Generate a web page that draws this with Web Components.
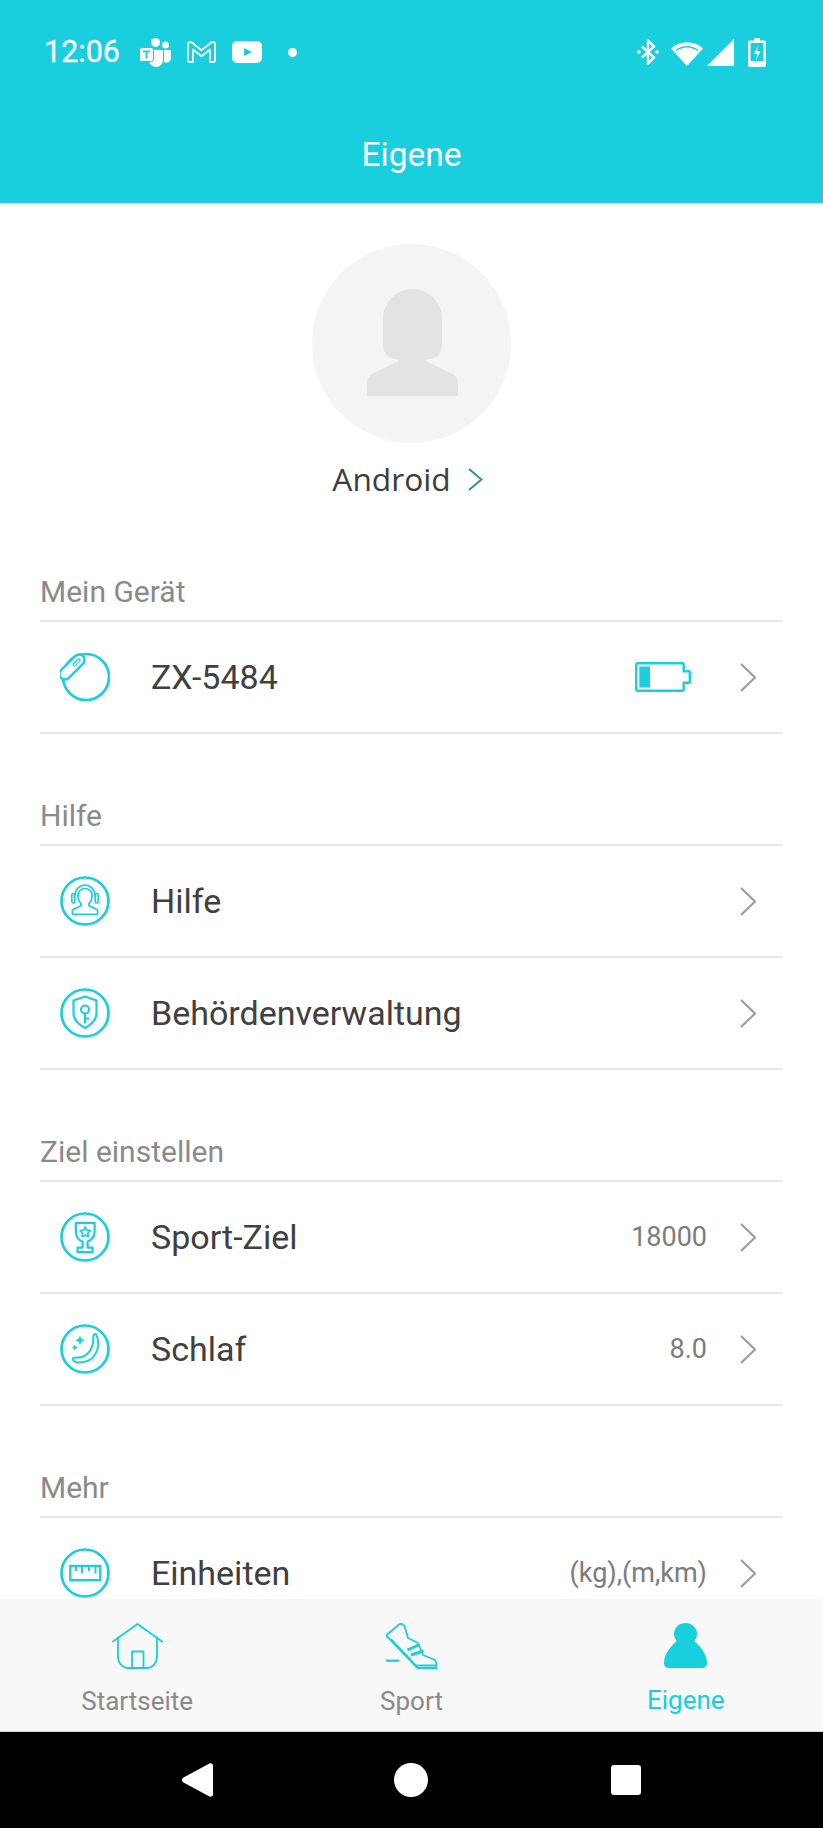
<!DOCTYPE html>
<html lang="de">
<head>
<meta charset="utf-8">
<title>Eigene</title>
<style>
  html, body { margin: 0; padding: 0; background: #fff; }
  body { font-family: Roboto, "Liberation Sans", sans-serif; }
</style>
</head>
<body>
<app-shell>
  <status-bar></status-bar>
  <title-bar>Eigene</title-bar>
  <scroll-area>
    <user-profile name="Android"></user-profile>
    <menu-section label="Mein Gerät">
      <menu-row label="ZX-5484" icon="device"><app-icon name="battery" slot="extra"></app-icon></menu-row>
    </menu-section>
    <menu-section label="Hilfe">
      <menu-row label="Hilfe" icon="help"></menu-row>
      <menu-row label="Behördenverwaltung" icon="shield"></menu-row>
    </menu-section>
    <menu-section label="Ziel einstellen">
      <menu-row label="Sport-Ziel" icon="trophy" value="18000"></menu-row>
      <menu-row label="Schlaf" icon="moon" value="8.0"></menu-row>
    </menu-section>
    <menu-section label="Mehr">
      <menu-row label="Einheiten" icon="ruler" value="(kg),(m,km)"></menu-row>
    </menu-section>
  </scroll-area>
  <tab-bar>
    <tab-item label="Startseite" icon="home"></tab-item>
    <tab-item label="Sport" icon="shoe"></tab-item>
    <tab-item label="Eigene" icon="person" active></tab-item>
  </tab-bar>
  <nav-bar></nav-bar>
</app-shell>

<script>
const TEAL = '#19cedd';
const ring = '<circle cx="25" cy="25" r="23.5" fill="none" stroke="currentColor" stroke-width="2.700"/>';

// every icon: [width, height, viewBox, inner svg]
const ICONS = {
  device: [50, 50, '0 0 50 50', `
    <circle cx="26" cy="25" r="23" fill="none" stroke="currentColor" stroke-width="2.700"/>
    <g transform="translate(12 15) rotate(-45)">
      <rect x="-15.500" y="-5.500" width="31" height="11" rx="5.500" fill="#fff" stroke="currentColor" stroke-width="2.400"/>
      <rect x="2" y="-1.300" width="9" height="2.600" rx="1.300" fill="none" stroke="currentColor" stroke-width="1.200"/>
    </g>`],
  help: [50, 50, '0 0 50 50', ring + `
    <g fill="none" stroke="currentColor" stroke-width="1.700" stroke-linejoin="round">
      <rect x="11.800" y="17.500" width="3" height="9.500" rx="1.500"/>
      <rect x="35.200" y="17.500" width="3" height="9.500" rx="1.500"/>
      <path d="M15 19.500a10 10.500 0 0 1 20 0"/>
      <path d="M18 19.500c0-4 3-7 7-7s7 3 7 7c0 3.400-1.200 6.400-3 8v2.200l7.400 3.600c.8.4 1.200 1 1.200 1.800v3.200H12.400v-3.200c0-.8.4-1.400 1.200-1.800l7.400-3.600v-2.200c-1.800-1.600-3-4.600-3-8z"/>
    </g>`],
  shield: [50, 50, '0 0 50 50', ring + `
    <g fill="none" stroke="currentColor" stroke-width="2.200" stroke-linejoin="round" stroke-linecap="round">
      <path d="M25 8.500l11.500 4v12.500c0 7-6 12-11.500 15-5.500-3-11.500-8-11.500-15V12.500z"/>
      <circle cx="25" cy="21.500" r="4"/>
      <path d="M25 25.500v9M25 30.500h3.500"/>
    </g>`],
  trophy: [50, 50, '0 0 50 50', ring + `
    <g fill="none" stroke="currentColor" stroke-width="2.200" stroke-linejoin="round">
      <path d="M15.800 10.800h18.800v9.200c0 5-3.600 8.600-7 9.600v6h5v4.600H17.600v-4.600h5v-6c-3.400-1-6.800-4.600-6.800-9.600z"/>
      <path stroke-width="1.600" d="M25.200 14.800l1.600 3.300 3.600.5-2.600 2.500.6 3.600-3.200-1.700-3.200 1.700.6-3.600-2.600-2.500 3.600-.5z"/>
    </g>`],
  moon: [50, 50, '0 0 50 50', ring + `
    <path d="M36.400 10.800c4.800 11.200 0 27.800-17.400 27.800-4.200 0-7-2.200-6.200-4 .7-1.500 4-.8 7.200-1.200 9-1.500 14-11 13.300-20.400-.2-3 2.100-4 3.100-2.200z" fill="none" stroke="currentColor" stroke-width="2" stroke-linejoin="round"/>
    <path d="M20 11.500l1.500 3.300 3.300 1.500-3.300 1.500-1.500 3.300-1.500-3.300-3.300-1.500 3.300-1.500zM14.700 20.500l1 2 2 1-2 1-1 2-1-2-2-1 2-1z" fill="currentColor"/>`],
  ruler: [50, 50, '0 0 50 50', ring + `
    <g fill="none" stroke="currentColor" stroke-width="2.400">
      <rect x="10.300" y="18" width="30" height="14.200"/>
      <path stroke-width="1.900" d="M16 18v5M22 18v7.500M29 18v5M35.500 18v7.500"/>
    </g>`],
  battery: [56, 30, '0 0 56 30', `
    <path d="M2.500 1.300h45a1.200 1.200 0 0 1 1.200 1.200v6.700h5c.7 0 1.100.4 1.100 1.100v9.400c0 .7-.4 1.100-1.100 1.100h-5v6.700a1.200 1.200 0 0 1-1.200 1.200h-45a1.200 1.200 0 0 1-1.200-1.200V2.500a1.200 1.200 0 0 1 1.200-1.200z" fill="none" stroke="currentColor" stroke-width="2.400"/>
    <rect x="4.300" y="4.500" width="10.700" height="21" fill="currentColor"/>`],
  chevron: [16, 29, '0 0 16 29', `<path d="M1 1l14 13.500L1 28" fill="none" stroke="currentColor" stroke-width="2"/>`],
  home: [51, 46, '0 0 51 46', `
    <g fill="none" stroke="currentColor" stroke-width="1.800" stroke-linejoin="round" stroke-linecap="round">
      <path d="M1 18.500L25.500 1 50 18.500"/>
      <path d="M6 14.500V33c0 7 4 12 11 12h17c7 0 11-5 11-12V14.500"/>
      <path d="M20 45V28.500h11.500V45"/>
    </g>`],
  shoe: [51, 46, '26 13 51 46', `
    <g fill="none" stroke="currentColor" stroke-width="1.800" stroke-linejoin="round">
      <path d="M26 25.500L39 14.500c2-1.200 4.500-.6 5.500 1.500l3.500 12 10 5 5 12 11 4.500c2 1 2.800 4 2.800 8.500H57.500z"/>
      <path d="M31 29L56 55.500h20.500"/>
      <path stroke-width="3" d="M47.500 40l12-5.500M51 45l12.500-4"/>
      <path stroke-width="2.200" d="M26 50.700h13"/>
    </g>`],
  person: [43, 45, '0 0 43 45', `
    <ellipse cx="21.500" cy="11" rx="11.500" ry="11" fill="currentColor"/>
    <path d="M14 17C8 22 0 30 0 40c0 3.500 2 5 5 5h33c3 0 5-1.500 5-5 0-10-8-18-14-23z" fill="currentColor"/>`]
};

class AppIcon extends HTMLElement {
  connectedCallback() {
    const [w, h, box, inner] = ICONS[this.getAttribute('name')];
    this.attachShadow({ mode: 'open' }).innerHTML = `
      <style>:host { display: block; width: ${w}px; height: ${h}px; color: var(--icon-color, ${TEAL}); } svg { display: block; }</style>
      <svg width="${w}" height="${h}" viewBox="${box}">${inner}</svg>`;
  }
}

class AppShell extends HTMLElement {
  constructor() {
    super();
    this.attachShadow({ mode: 'open' }).innerHTML = `
      <style>
        :host { display: flex; flex-direction: column; width: 823px; height: 1828px; overflow: hidden; background: #fff; }
      </style>
      <slot></slot>`;
  }
}

class StatusBar extends HTMLElement {
  constructor() {
    super();
    this.attachShadow({ mode: 'open' }).innerHTML = `
      <style>
        :host { display: flex; align-items: center; height: 104px; padding: 0 57px 0 44px; background: ${TEAL}; color: #fff; flex: none; }
        .time { font: 400 30.500px/1 Roboto, sans-serif; width: 75px; margin-right: 21px; white-space: nowrap; -webkit-text-stroke: .3px #fff; }
        .left { display: flex; align-items: center; gap: 16px; flex: 1; }
        .right { display: flex; align-items: center; }
        svg { display: block; }
      </style>
      <span class="time">12:06</span>
      <div class="left">
        <svg width="31" height="29" viewBox="0 0 31 29" fill="#fff">
          <circle cx="15.500" cy="4.500" r="4.500"/>
          <circle cx="25.500" cy="7" r="3.500"/>
          <path d="M24 12h7v8c0 2.800-2.200 4.500-4.500 4.500-1 0-1.800-.2-2.500-.6z"/>
          <path d="M9 12h14v10c0 4-3.200 7-7 7s-7-3-7-7z"/>
          <rect x="-.5" y="9.500" width="14" height="14" rx="2" stroke="${TEAL}" stroke-width="1"/>
          <path d="M3 12.500h7v1.800H7.500v6.200h-2v-6.200H3z" fill="${TEAL}"/>
        </svg>
        <svg width="29" height="22" viewBox="0 0 29 22">
          <path d="M1 3.300C1 1.200 3.200.2 4.800 1.500l9.700 7.800 9.700-7.800C25.800.2 28 1.200 28 3.300V19.500a1.500 1.500 0 0 1-1.500 1.500H23V8.500l-8.500 6.800L6 8.500V21H2.500A1.500 1.500 0 0 1 1 19.500z" fill="none" stroke="#fff" stroke-width="1.800" stroke-linejoin="round"/>
        </svg>
        <svg width="30" height="22" viewBox="0 0 30 22">
          <rect width="30" height="22" rx="5" fill="#fff"/>
          <path d="M12 7l8 4-8 4z" fill="${TEAL}"/>
        </svg>
        <svg width="9" height="9" viewBox="0 0 9 9" style="margin-left:10px"><circle cx="4.500" cy="4.500" r="4.500" fill="#fff"/></svg>
      </div>
      <div class="right">
        <svg width="22" height="26" viewBox="0 0 22 26" style="margin-right:12px">
          <path d="M5 7.500l12 11-6 6V1.500l6 6-12 11" fill="none" stroke="#fff" stroke-width="2.400"/>
          <circle cx="2" cy="13" r="1.800" fill="#fff"/><circle cx="20" cy="13" r="1.800" fill="#fff"/>
        </svg>
        <svg width="32" height="27" viewBox="0 0 32 27" style="margin-right:4px">
          <path d="M0 9.500C9 1 23 1 32 9.500L16 27z" fill="#fff"/>
          <path d="M5 11.500c6.500-5 15.500-5 22 0" fill="none" stroke="${TEAL}" stroke-width="1.500"/>
        </svg>
        <svg width="27" height="27" viewBox="0 0 27 27" style="margin-right:14px"><path d="M27 0v27H0z" fill="#fff"/></svg>
        <svg width="18" height="29" viewBox="0 0 18 29">
          <path d="M6 0h6v2.500h4a2 2 0 0 1 2 2V27a2 2 0 0 1-2 2H2a2 2 0 0 1-2-2V4.500a2 2 0 0 1 2-2h4z" fill="#fff"/>
          <rect x="2.500" y="5" width="13" height="18" fill="${TEAL}"/>
          <path d="M10.500 6.500L5.500 16h3.200l-1.200 8 5.500-11H9.500z" fill="#fff" stroke="${TEAL}" stroke-width=".8"/>
        </svg>
      </div>`;
  }
}

class TitleBar extends HTMLElement {
  constructor() {
    super();
    this.attachShadow({ mode: 'open' }).innerHTML = `
      <style>
        :host { display: flex; align-items: center; justify-content: center; height: 99px; box-sizing: border-box; padding-top: 2px; background: ${TEAL}; color: #fff; font: 400 33.500px Roboto, sans-serif; flex: none; }
      </style>
      <slot></slot>`;
  }
}

class ScrollArea extends HTMLElement {
  constructor() {
    super();
    this.attachShadow({ mode: 'open' }).innerHTML = `
      <style>:host { display: block; flex: 1; min-height: 0; overflow: hidden; padding: 0 41px 0 40px; }</style>
      <slot></slot>`;
  }
}

class UserProfile extends HTMLElement {
  connectedCallback() {
    this.attachShadow({ mode: 'open' }).innerHTML = `
      <style>
        :host { display: flex; flex-direction: column; align-items: center; padding-top: 41px; height: 307px; box-sizing: border-box; }
        .avatar { width: 199px; height: 199px; border-radius: 50%; background: #f4f4f4; display: flex; justify-content: center; padding-top: 45px; box-sizing: border-box; }
        .avatar svg { margin-left: 2px; }
        .name { display: flex; align-items: center; gap: 17px; margin-top: 14px; margin-right: 7px; font: 400 31.700px/44px "Open Sans", sans-serif; color: #3c3c3c; }
        svg { display: block; }
      </style>
      <div class="avatar">
        <svg width="91" height="107" viewBox="0 0 91 107"><path d="M16 29.500a29.500 29.500 0 0 1 59 0V55c0 8-4 13-10 14.500l-5 1c-1 .4-1 1.400 0 1.900L86 85c3 2 5 5 5 9v13H0V94c0-4 2-7 5-9l26-12.600c1-.5 1-1.500 0-1.900l-5-1C20 68 16 63 16 55z" fill="#e3e3e3"/></svg>
      </div>
      <div class="name">
        <span>${this.getAttribute('name')}</span>
        <svg width="15" height="23" viewBox="0 0 15 23"><path d="M1 1l12.500 10.500L1 22" fill="none" stroke="#2a8b98" stroke-width="1.800"/></svg>
      </div>`;
  }
}

class MenuSection extends HTMLElement {
  connectedCallback() {
    this.attachShadow({ mode: 'open' }).innerHTML = `
      <style>
        :host { display: block; }
        h2 { margin: 0; height: 112px; box-sizing: border-box; padding-top: 66px; font: 400 30px/32px Roboto, sans-serif; color: #8a8a8a; border-bottom: 2px solid #e6e6e6; }
      </style>
      <h2>${this.getAttribute('label')}</h2>
      <slot></slot>`;
  }
}

class MenuRow extends HTMLElement {
  connectedCallback() {
    const value = this.getAttribute('value');
    this.attachShadow({ mode: 'open' }).innerHTML = `
      <style>
        :host { display: flex; align-items: center; height: 112px; box-sizing: border-box; border-bottom: 2px solid #e6e6e6; padding: 0 26px 0 20px; }
        .label { flex: 1; margin-left: 41px; font: 400 34px Roboto, sans-serif; color: #404040; white-space: nowrap; }
        .value { font: 400 27px Roboto, sans-serif; color: #7c7c7c; margin-right: 33px; white-space: nowrap; }
        ::slotted([slot="extra"]) { margin-right: 49px; }
        .chev { --icon-color: #999; }
      </style>
      <app-icon name="${this.getAttribute('icon')}"></app-icon>
      <span class="label">${this.getAttribute('label')}</span>
      ${value ? `<span class="value">${value}</span>` : ''}
      <slot name="extra"></slot>
      <app-icon class="chev" name="chevron"></app-icon>`;
  }
}

class TabBar extends HTMLElement {
  constructor() {
    super();
    this.attachShadow({ mode: 'open' }).innerHTML = `
      <style>:host { display: grid; grid-template-columns: repeat(3, 1fr); height: 133px; box-sizing: border-box; background: #f8f8f8; border-bottom: 1px solid #d8d8d8; flex: none; }</style>
      <slot></slot>`;
  }
}

class TabItem extends HTMLElement {
  connectedCallback() {
    const active = this.hasAttribute('active');
    this.attachShadow({ mode: 'open' }).innerHTML = `
      <style>
        :host { display: flex; flex-direction: column; align-items: center; padding-top: 24px; }
        span { margin-top: 16px; font: 400 26px/32px Roboto, sans-serif; color: ${active ? TEAL : '#8a8a8a'}; }
      </style>
      <app-icon name="${this.getAttribute('icon')}"></app-icon>
      <span>${this.getAttribute('label')}</span>`;
  }
}

class NavBar extends HTMLElement {
  constructor() {
    super();
    this.attachShadow({ mode: 'open' }).innerHTML = `
      <style>
        :host { display: grid; grid-template-columns: 1fr 34px 1fr; align-items: center; height: 96px; background: #000; flex: none; }
        .back { justify-self: end; margin-right: 182px; }
        .home { width: 34px; height: 34px; border-radius: 50%; background: #fff; margin-left: -1px; }
        .square { width: 30px; height: 30px; border-radius: 3px; background: #fff; margin-left: 182px; }
        svg { display: block; }
      </style>
      <svg class="back" width="31" height="34" viewBox="0 0 31 34"><path d="M27 .8c2-1.200 4 0 4 2v28.400c0 2-2 3.200-4 2L1.500 19.500c-2-1.200-2-3.800 0-5z" fill="#fff"/></svg>
      <div class="home"></div>
      <div class="square"></div>`;
  }
}

customElements.define('app-icon', AppIcon);
customElements.define('app-shell', AppShell);
customElements.define('status-bar', StatusBar);
customElements.define('title-bar', TitleBar);
customElements.define('scroll-area', ScrollArea);
customElements.define('user-profile', UserProfile);
customElements.define('menu-section', MenuSection);
customElements.define('menu-row', MenuRow);
customElements.define('tab-bar', TabBar);
customElements.define('tab-item', TabItem);
customElements.define('nav-bar', NavBar);
</script>
</body>
</html>
